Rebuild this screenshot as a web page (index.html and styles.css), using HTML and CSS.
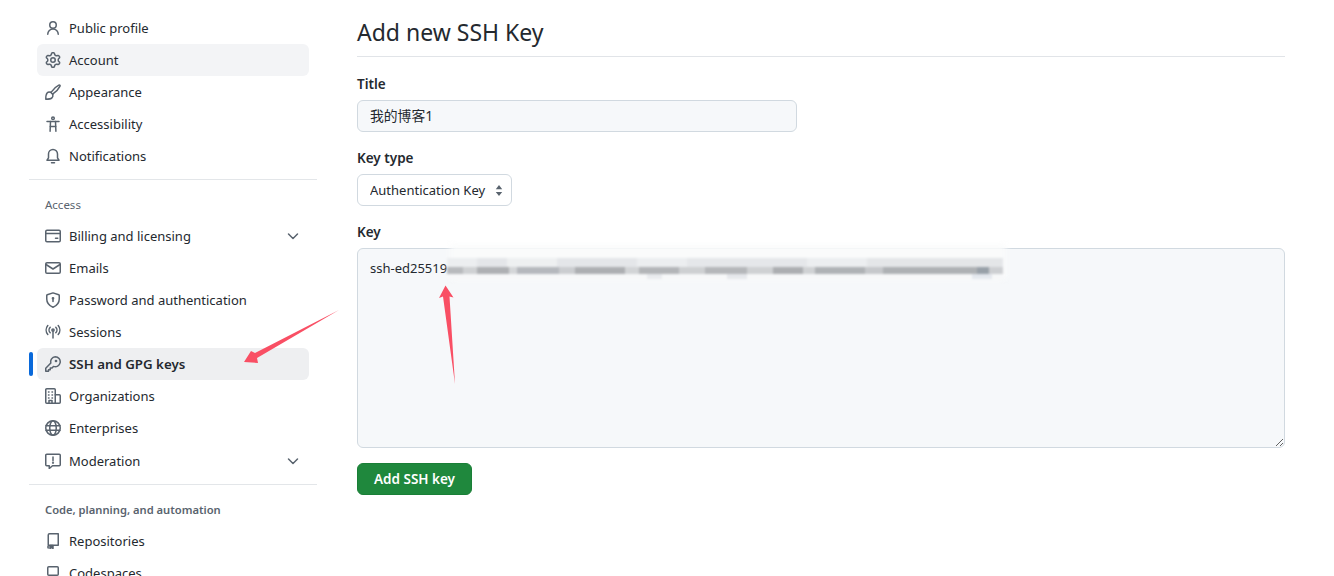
FILE: index.html
```html
<!DOCTYPE html>
<html>
<head>
    <meta charset="UTF-8">
    <title>Add new SSH Key</title>
    <link rel="stylesheet" href="styles.css">
</head>
<body>
<div class="page">
    <nav class="sidebar">
        <a class="nav-item">
            <svg class="icon line" viewBox="0 0 16 16"><circle cx="8" cy="5" r="3.25"/><path d="M2.75 14.25a5.25 5.25 0 0 1 10.5 0"/></svg>
            Public profile
        </a>
        <a class="nav-item hover">
            <svg class="icon" viewBox="0 0 16 16"><path d="M8 0a8.2 8.2 0 0 1 .701.031C9.444.095 9.99.645 10.16 1.29l.288 1.107c.018.066.079.158.212.224.231.114.454.243.668.386.123.082.233.09.299.071l1.103-.303c.644-.176 1.392.021 1.82.63.27.385.506.792.704 1.218.315.675.111 1.422-.364 1.891l-.814.806c-.049.048-.098.147-.088.294.016.257.016.515 0 .772-.01.147.038.246.088.294l.814.806c.475.469.679 1.216.364 1.891a7.977 7.977 0 0 1-.704 1.217c-.428.61-1.176.807-1.82.63l-1.102-.302c-.067-.019-.177-.011-.3.071a5.909 5.909 0 0 1-.668.386c-.133.066-.194.158-.211.224l-.29 1.106c-.168.646-.715 1.196-1.458 1.26a8.006 8.006 0 0 1-1.402 0c-.743-.064-1.289-.614-1.458-1.26l-.289-1.106c-.018-.066-.079-.158-.212-.224a5.738 5.738 0 0 1-.668-.386c-.123-.082-.233-.09-.299-.071l-1.103.303c-.644.176-1.392-.021-1.82-.63a8.12 8.12 0 0 1-.704-1.218c-.315-.675-.111-1.422.363-1.891l.815-.806c.05-.048.098-.147.088-.294a6.214 6.214 0 0 1 0-.772c.01-.147-.038-.246-.088-.294l-.815-.806C.635 6.045.431 5.298.746 4.623a7.92 7.92 0 0 1 .704-1.217c.428-.61 1.176-.807 1.82-.63l1.102.302c.067.019.177.011.3-.071.214-.143.437-.272.668-.386.133-.066.194-.158.211-.224l.29-1.106C6.009.645 6.556.095 7.299.03 7.53.01 7.764 0 8 0Zm-.571 1.525c-.036.003-.108.036-.137.146l-.289 1.105c-.147.561-.549.967-.998 1.189-.173.086-.34.183-.5.29-.417.278-.97.423-1.529.27l-1.103-.303c-.109-.03-.175.016-.195.045-.22.312-.412.644-.573.99-.014.031-.021.11.059.19l.815.806c.411.406.562.957.53 1.456a4.709 4.709 0 0 0 0 .582c.032.499-.119 1.05-.53 1.456l-.815.806c-.081.08-.073.159-.059.19.162.346.353.677.573.989.02.03.085.076.195.046l1.102-.303c.56-.153 1.113-.008 1.53.27.161.107.328.204.501.29.447.222.85.629.997 1.189l.289 1.105c.029.109.101.143.137.146a6.6 6.6 0 0 0 1.142 0c.036-.003.108-.036.137-.146l.289-1.105c.147-.561.549-.967.998-1.189.173-.086.34-.183.5-.29.417-.278.97-.423 1.529-.27l1.103.303c.109.029.175-.016.195-.045.22-.313.411-.644.573-.99.014-.031.021-.11-.059-.19l-.815-.806c-.411-.406-.562-.957-.53-1.456a4.709 4.709 0 0 0 0-.582c-.032-.499.119-1.05.53-1.456l.815-.806c.081-.08.073-.159.059-.19a6.464 6.464 0 0 0-.573-.989c-.02-.03-.085-.076-.195-.046l-1.102.303c-.56.153-1.113.008-1.53-.27a4.44 4.44 0 0 0-.501-.29c-.447-.222-.85-.629-.997-1.189l-.289-1.105c-.029-.11-.101-.143-.137-.146a6.6 6.6 0 0 0-1.142 0ZM11 8a3 3 0 1 1-6 0 3 3 0 0 1 6 0ZM9.5 8a1.5 1.5 0 1 0-3.001.001A1.5 1.5 0 0 0 9.5 8Z"/></svg>
            Account
        </a>
        <a class="nav-item">
            <svg class="icon line" viewBox="0 0 16 16"><path d="M6.2 8.1c1.8-2.6 5-5.7 7.6-7 1.1-.4 1.6.2 1.1 1.2-1.3 2.6-4.4 5.8-7 7.6"/><path d="M5.6 8.3l2.2 2.1"/><path d="M7.8 11a3 3 0 0 1-.9 2.9c-1 1-3.6 1.3-6.1 1.3 0-2.5.3-5 1.3-6.1a3 3 0 0 1 3.1-.9"/></svg>
            Appearance
        </a>
        <a class="nav-item">
            <svg class="icon line" viewBox="0 0 16 16"><circle cx="8" cy="2.2" r="1.3"/><path d="M2 5.500h12"/><path d="M5.500 5.500L5.100 15.200"/><path d="M10.500 5.500L10.900 15.200"/><path d="M5.300 10.500h5.400"/></svg>
            Accessibility
        </a>
        <a class="nav-item">
            <svg class="icon line" viewBox="0 0 16 16"><path d="M2 12.250h12l-1.500-2.400V6a4.500 4.500 0 0 0-9 0v3.850z"/><path d="M6.500 14.750h3"/></svg>
            Notifications
        </a>

        <hr class="divider">
        <h2 class="nav-heading">Access</h2>

        <a class="nav-item">
            <svg class="icon line" viewBox="0 0 16 16"><rect x=".75" y="2.25" width="14.5" height="11.5" rx="1.25"/><path d="M.75 5.5h14.5"/><path d="M10.5 10.25h2.25"/></svg>
            Billing and licensing
            <svg class="icon line chevron" viewBox="0 0 16 16"><path d="M3.5 6l4.5 4.5L12.500 6"/></svg>
        </a>
        <a class="nav-item">
            <svg class="icon line" viewBox="0 0 16 16"><rect x=".75" y="2.75" width="14.500" height="10.500" rx="1.25"/><path d="M1 4.500l7 4.500 7-4.500"/></svg>
            Emails
        </a>
        <a class="nav-item">
            <svg class="icon line" viewBox="0 0 16 16"><path d="M8 .9l5.750 1.900c.3.1.5.400.5.700V7c0 3.500-2 6.500-6.250 8.200C3.750 13.500 1.750 10.500 1.750 7V3.500c0-.3.2-.6.5-.7z"/><path d="M8 7v2.500" /><circle cx="8" cy="6.250" r=".6"/></svg>
            Password and authentication
        </a>
        <a class="nav-item">
            <svg class="icon line" viewBox="0 0 16 16"><circle cx="8" cy="6" r="1.100"/><path d="M8 7.500V14"/><path d="M5.200 3.200a4 4 0 0 0 0 5.600"/><path d="M10.800 3.200a4 4 0 0 1 0 5.600"/><path d="M2.800 1.500a7 7 0 0 0 0 9"/><path d="M13.200 1.500a7 7 0 0 1 0 9"/></svg>
            Sessions
        </a>
        <a class="nav-item current">
            <svg class="icon line" viewBox="0 0 16 16"><path d="M10.250.75a5 5 0 1 1-1.800 9.670L7 12H5.250v1.750H3.500v1.500H.75v-3l5.100-5.200A5 5 0 0 1 10.250.75z"/><circle cx="11" cy="5" r=".6"/></svg>
            SSH and GPG keys
        </a>
        <a class="nav-item">
            <svg class="icon line" viewBox="0 0 16 16"><path d="M1.750 15.250a1 1 0 0 1-1-1V1.750a1 1 0 0 1 1-1h7.500a1 1 0 0 1 1 1v13.500z"/><path d="M10.250 6.750h4a1 1 0 0 1 1 1v6.500a1 1 0 0 1-1 1h-4"/><path d="M4 15v-2.500h3V15"/><path d="M3.500 4h.5M7 4h.5M3.500 7h.5M7 7h.5M3.500 10h.5M7 10h.5"/></svg>
            Organizations
        </a>
        <a class="nav-item">
            <svg class="icon line" viewBox="0 0 16 16"><circle cx="8" cy="8" r="7.250"/><ellipse cx="8" cy="8" rx="3.250" ry="7.250"/><path d="M1 5.750h14M1 10.250h14"/></svg>
            Enterprises
        </a>
        <a class="nav-item moderation">
            <svg class="icon line" viewBox="0 0 16 16"><path d="M1.750 1.250h12.500a1 1 0 0 1 1 1v9.500a1 1 0 0 1-1 1H7.500l-3.250 2.750V12.750H1.750a1 1 0 0 1-1-1v-9.500a1 1 0 0 1 1-1z"/><path d="M8 4v3.500"/><circle cx="8" cy="9.750" r=".4"/></svg>
            Moderation
            <svg class="icon line chevron" viewBox="0 0 16 16"><path d="M3.500 6l4.500 4.500L12.500 6"/></svg>
        </a>

        <hr class="divider">
        <h2 class="nav-heading strong">Code, planning, and automation</h2>

        <a class="nav-item">
            <svg class="icon line" viewBox="0 0 16 16"><path d="M3.250 12.250V2a1.250 1.250 0 0 1 1.250-1.250h8.750v11.500H4.500a1.750 1.750 0 0 0-1.250 2.750"/><path d="M5 12.500V15.500l1.500-1 1.500 1V12.500z" class="solid"/></svg>
            Repositories
        </a>
        <a class="nav-item">
            <svg class="icon line" viewBox="0 0 16 16"><rect x="2.750" y="1.750" width="10.500" height="8.500" rx="1"/><path d="M.75 13.250h14.500"/></svg>
            Codespaces
        </a>
    </nav>

    <main class="content">
        <h1 class="page-title">Add new SSH Key</h1>
        <form>
            <label class="field-label" for="title">Title</label>
            <input class="input title-input" id="title" type="text" value="我的博客1">

            <label class="field-label" for="keytype">Key type</label>
            <div class="select-wrap">
                <select class="input key-type" id="keytype">
                    <option>Authentication Key</option>
                </select>
                <svg class="select-caret" viewBox="0 0 8 12"><path d="M4 0l3.500 4.500h-7zM4 12L.5 7.500h7z"/></svg>
            </div>

            <label class="field-label" for="key">Key</label>
            <div class="key-wrap">
                <textarea class="input key-input" id="key">ssh-ed25519</textarea>
                <div class="blur-halo"></div>
                <div class="blur-band"></div>
            </div>

            <button class="submit" type="button">Add SSH key</button>
        </form>
    </main>
</div>

<!-- red arrows pasted on top of the screenshot -->
<svg class="arrow arrow-nav" viewBox="0 0 110 70"><path d="M9 57 L16 46 L20 48 L104 5 L22 53 L23 58 Z"/></svg>
<svg class="arrow arrow-key" viewBox="0 0 40 110"><path d="M15.500 5.500 L23.500 17.500 L19.500 16.500 L25 104 L13 16.500 L9 18 Z"/></svg>
</body>
</html>
```
FILE: styles.css
```css
html, body {
    margin: 0;
    height: 576px;
    overflow: hidden;
    background: #fff;
}
body {
    position: relative;
    font-family: "Noto Sans", "Noto Sans CJK SC", sans-serif;
    font-size: 13px;
    color: #24292f;
}
.page {
    display: flex;
    padding: 12px 0 0 29px;
}

/* sidebar */
.sidebar {
    width: 288px;
    flex-shrink: 0;
}
.nav-item {
    position: relative;
    display: flex;
    align-items: center;
    gap: 8px;
    height: 32px;
    margin: 0 8px;
    padding: 0 8px;
    border-radius: 6px;
}
.nav-item.hover {
    background: #f3f4f6;
}
.nav-item.current {
    background: #eeeff1;
    font-size: 13.3px;
    font-weight: 600;
}
.nav-item.current::before {
    content: "";
    position: absolute;
    left: -8px;
    top: 4px;
    width: 4px;
    height: 24px;
    border-radius: 6px;
    background: #0969da;
}
.moderation {
    margin-top: 1px;
}
.icon {
    width: 16px;
    height: 16px;
    flex-shrink: 0;
    fill: #59636e;
}
.icon.line {
    fill: none;
    stroke: #59636e;
    stroke-width: 1.5;
    stroke-linecap: round;
    stroke-linejoin: round;
}
.icon .solid {
    fill: #59636e;
}
.chevron {
    margin-left: auto;
}
.divider {
    height: 1px;
    margin: 7px 0 0;
    border: 0;
    background: #e3e6e9;
}
.nav-heading {
    margin: 0;
    padding: 15px 16px 0;
    height: 25px;
    line-height: 20px;
    font-size: 11.5px;
    font-weight: 400;
    color: #59636e;
}
.nav-heading.strong {
    font-size: 11.2px;
    font-weight: 600;
}

/* form */
.content {
    width: 928px;
    margin-left: 40px;
}
.page-title {
    margin: 0 0 17px;
    height: 44px;
    line-height: 40px;
    font-size: 23px;
    font-weight: 400;
    border-bottom: 1px solid #e1e4e8;
}
.field-label {
    display: block;
    height: 20px;
    margin-bottom: 6px;
    line-height: 20px;
    font-size: 13.5px;
    font-weight: 600;
}
.input {
    box-sizing: border-box;
    display: block;
    font: inherit;
    color: #24292f;
    border: 1px solid #d1d9e0;
    border-radius: 6px;
    outline: none;
}
.title-input {
    width: 440px;
    height: 32px;
    margin-bottom: 16px;
    padding: 0 12px 2px;
    font-size: 13.8px;
    background: #f6f8fa;
}
.select-wrap {
    position: relative;
    width: 155px;
    margin-bottom: 16px;
}
.key-type {
    width: 155px;
    height: 32px;
    padding: 0 12px;
    background: #fff;
    appearance: none;
}
.select-caret {
    position: absolute;
    right: 9px;
    top: 11px;
    width: 8px;
    height: 11px;
    fill: #59636e;
}
.key-wrap {
    position: relative;
    margin-bottom: 15px;
}
.key-input {
    width: 928px;
    height: 200px;
    padding: 10px 12px;
    background: #f6f8fa;
    resize: vertical;
}
.blur-halo {
    position: absolute;
    left: 93px;
    top: -3px;
    width: 556px;
    height: 34px;
    background: #fafbfb;
    filter: blur(3px);
}
.blur-band {
    position: absolute;
    left: 90px;
    top: 10px;
    width: 556px;
    height: 21px;
    background:
        linear-gradient(90deg,
            #b8babd 0 16px, #cfd1d3 16px 30px, #aeb0b3 30px 62px, #d4d6d8 62px 70px, #b5b8bd 70px 112px, #cbcdd0 112px 128px,
            #adafb2 128px 178px, #d2d4d6 178px 192px, #b3b5b8 192px 232px, #ced0d2 232px 258px, #b5b7ba 258px 300px,
            #cfd1d3 300px 326px, #acaeb1 326px 356px, #d0d2d4 356px 368px, #afb2b5 368px 418px, #c6c8cb 418px 436px,
            #aeb1b4 436px 530px, #98a0a8 530px 542px, #cdcfd2 542px 556px) 0 9px / 100% 7px no-repeat,
        linear-gradient(90deg,
            #eceef0 0 30px, #e4e6e9 30px 60px, #eef0f1 60px 110px, #e4e6e9 110px 190px, #eceef0 190px 240px, #e5e7ea 240px 360px,
            #eceef0 360px 420px, #e4e6e8 420px 556px) 0 0 / 100% 9px no-repeat,
        linear-gradient(90deg,
            #f7f8f9 0 200px, #e9ebee 200px 215px, #f7f8f9 215px 280px, #e6e8ec 280px 300px, #f7f8f9 300px 525px, #e4e8ee 525px 545px, #f7f8f9 545px 556px) 0 16px / 100% 5px no-repeat;
    filter: blur(1px);
}
.submit {
    display: block;
    width: 115px;
    height: 32px;
    padding: 0;
    font: inherit;
    font-size: 13.5px;
    font-weight: 600;
    color: #fff;
    background: #1f883d;
    border: 1px solid #1a7f37;
    border-radius: 6px;
}

/* annotation arrows */
.arrow {
    position: absolute;
    fill: #f94f64;
}
.arrow-nav {
    left: 235px;
    top: 305px;
    width: 110px;
    height: 70px;
}
.arrow-key {
    left: 430px;
    top: 280px;
    width: 40px;
    height: 110px;
}
```
